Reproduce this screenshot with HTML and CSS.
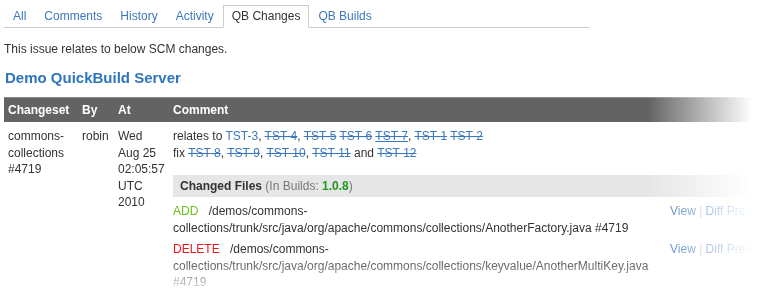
FILE: index.html
```html
<!DOCTYPE html>
<html lang="en">
<head>
    <meta charset="UTF-8">
    <meta name="viewport" content="width=device-width, initial-scale=1.0">
    <title>QB Changes</title>
    <link rel="stylesheet" href="styles.css">
</head>
<body>
    <div class="page">
        <ul class="tabs">
            <li><a href="#">All</a></li>
            <li><a href="#">Comments</a></li>
            <li><a href="#">History</a></li>
            <li><a href="#">Activity</a></li>
            <li class="active"><a href="#">QB Changes</a></li>
            <li><a href="#">QB Builds</a></li>
        </ul>

        <p class="intro">This issue relates to below SCM changes.</p>

        <h2 class="server">Demo QuickBuild Server</h2>

        <table class="changes">
            <thead>
                <tr>
                    <th class="col-set">Changeset</th>
                    <th class="col-by">By</th>
                    <th class="col-at">At</th>
                    <th>Comment</th>
                </tr>
            </thead>
            <tbody>
                <tr>
                    <td>commons-collections #4719</td>
                    <td>robin</td>
                    <td>Wed Aug 25 02:05:57 UTC 2010</td>
                    <td>
                        <div class="comment">
                            relates to <a href="#">TST-3</a>, <a class="done" href="#">TST-4</a>, <a class="done" href="#">TST-5</a> <a class="done" href="#">TST-6</a> <a class="done hover" href="#">TST-7</a>, <a class="done" href="#">TST-1</a> <a class="done" href="#">TST-2</a><br>
                            fix <a class="done" href="#">TST-8</a>, <a class="done" href="#">TST-9</a>, <a class="done" href="#">TST-10</a>, <a class="done" href="#">TST-11</a> and <a class="done" href="#">TST-12</a>
                        </div>
                        <div class="files-head">
                            <b>Changed Files</b> <span class="builds">(In Builds: <b class="build">1.0.8</b>)</span>
                        </div>
                        <div class="file">
                            <div class="path"><span class="action add">ADD</span> /demos/commons-collections/trunk/src/java/org/apache/commons/collections/AnotherFactory.java #4719</div>
                            <div class="links"><a href="#">View</a> <span class="sep">|</span> <a href="#">Diff Previous</a></div>
                        </div>
                        <div class="file">
                            <div class="path"><span class="action delete">DELETE</span> /demos/commons-collections/trunk/src/java/org/apache/commons/collections/keyvalue/AnotherMultiKey.java #4719</div>
                            <div class="links"><a href="#">View</a> <span class="sep">|</span> <a href="#">Diff Previous</a></div>
                        </div>
                    </td>
                </tr>
            </tbody>
        </table>
    </div>
</body>
</html>
```

FILE: styles.css
```css
body {
    margin: 0;
    font-family: "Liberation Sans", Arial, sans-serif;
    font-size: 12px;
    color: #333;
    background: white;
    overflow: hidden;
}
a {
    color: #3b78bd;
    text-decoration: none;
}
.page {
    height: 294px;
    -webkit-mask-image: linear-gradient(to bottom, #000 250px, transparent 291px);
    mask-image: linear-gradient(to bottom, #000 250px, transparent 291px);
}
.tabs {
    display: flex;
    list-style: none;
    width: 586px;
    margin: 5px 0 0 4px;
    padding: 0;
    border-bottom: 1px solid #ccc;
}
.tabs li {
    border: 1px solid transparent;
    border-bottom: none;
    margin-bottom: -1px;
}
.tabs a {
    display: block;
    padding: 3px 8px 4px;
    line-height: 14px;
}
.tabs .active {
    border-color: #ccc;
    background: white;
    border-bottom: 1px solid white;
}
.tabs .active a {
    color: #333;
}
.intro {
    margin: 13px 0 0 4px;
    line-height: 16px;
}
.server {
    margin: 11px 0 0 5px;
    font-size: 15px;
    line-height: 20px;
    color: #2f75bd;
}
.changes {
    margin: 9px 0 0 4px;
    width: 752px;
    border-collapse: collapse;
    table-layout: fixed;
    -webkit-mask-image: linear-gradient(to right, #000 644px, transparent 748px);
    mask-image: linear-gradient(to right, #000 644px, transparent 748px);
}
.changes th {
    background: #636363;
    border-top: 1px solid #8a8a8a;
    color: white;
    text-align: left;
    height: 24px;
    padding: 0 3px 0 4px;
}
.changes td {
    vertical-align: top;
    padding: 6px 3px 0 4px;
    line-height: 16.5px;
}
.col-set {
    width: 67px;
}
.col-by {
    width: 29px;
}
.col-at {
    width: 48px;
}
.comment a.done {
    text-decoration: line-through;
}
.comment a.hover {
    text-decoration: line-through underline;
}
.files-head {
    margin-top: 14px;
    background: #e6e6e6;
    padding: 0 7px;
    line-height: 22px;
}
.builds {
    color: #777;
}
.build {
    color: #1e9a1e;
}
.file {
    display: flex;
    gap: 7px;
    margin-top: 6px;
}
.file + .file {
    margin-top: 5px;
}
.path {
    width: 490px;
    flex-shrink: 0;
}
.action {
    margin-right: 7px;
}
.add {
    color: #6ac11f;
}
.delete {
    color: #e81818;
}
.links {
    white-space: nowrap;
    color: #aaa;
}
.links .sep {
    color: #c9b3c9;
}
```
